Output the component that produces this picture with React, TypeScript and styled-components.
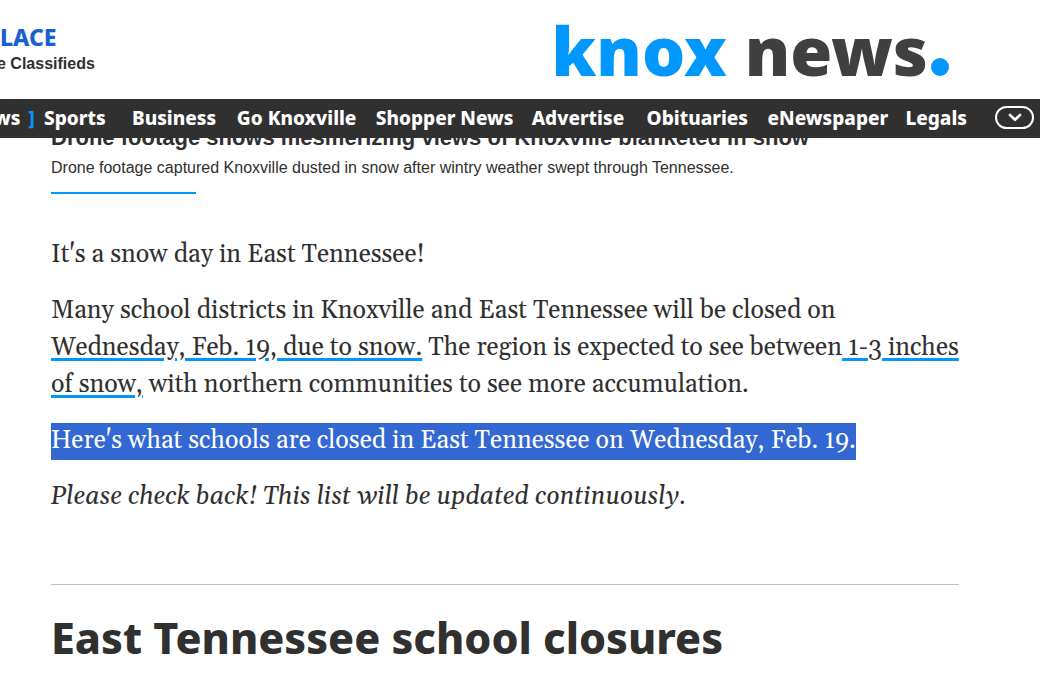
import React from 'react';
import styled, { createGlobalStyle } from 'styled-components';

const blue = '#0098ff';
const ink = '#303030';
const display = '"Noto Sans", "Open Sans", sans-serif';
const sans = '"Liberation Sans", Arial, sans-serif';
const serif = 'Gelasio, Georgia, "Liberation Serif", serif';

const GlobalStyle = createGlobalStyle`
  *, *::before, *::after { box-sizing: border-box; }
  body { margin: 0; background: #fff; color: ${ink}; overflow-x: hidden; }
  a { color: inherit; text-decoration: none; }
  h1, h2, p, ul { margin: 0; padding: 0; }
`;

const Header = styled.header`
  position: sticky;
  top: 0;
  z-index: 1;
  background: #fff;
`;

const Masthead = styled.div`
  display: flex;
  justify-content: space-between;
  align-items: flex-start;
  height: 99px;
  padding-right: 91px;
`;

const Promo = styled.a`
  display: flex;
  flex-direction: column;
  padding-top: 22px;
  white-space: nowrap;
`;

const PromoTitle = styled.span`
  font: 800 23px/30px ${display};
  color: #1660cf;
`;

const PromoText = styled.span`
  margin-left: -3px;
  font: 700 16px/24px ${sans};
`;

const Logo = styled.a`
  display: flex;
  align-items: baseline;
  font: 900 68px/90px ${display};
  padding-top: 5px;
  color: #404040;
`;

const LogoCity = styled.span`
  color: ${blue};
  margin-right: 18px;
`;

const LogoDot = styled.span`
  width: 18px;
  height: 18px;
  border-radius: 50%;
  margin-left: 3px;
  background: ${blue};
`;

const NavBar = styled.nav`
  display: flex;
  align-items: center;
  height: 39px;
  padding: 0 6px 2px 0;
  background: ${ink};
  color: #fff;
  font: 800 19px/36px ${display};
  white-space: nowrap;
`;

const CurrentSection = styled.a`
  display: flex;
  gap: 8px;
  width: 50px;
  margin-left: -6px;
`;

const Bracket = styled.span`
  color: ${blue};
`;

const NavList = styled.ul`
  display: grid;
  flex: 1;
  grid-template-columns: 88fr 105fr 139fr 156fr 115fr 121fr 138fr max-content;
  list-style: none;
`;

const MoreButton = styled.button`
  display: flex;
  align-items: center;
  justify-content: center;
  width: 39px;
  height: 23px;
  margin-left: 28px;
  padding: 0;
  border: 2px solid #fff;
  border-radius: 12px;
  background: none;
  color: #fff;
`;

const Article = styled.main`
  margin-top: -13px;
  padding: 0 81px 24px 51px;
`;

const VideoTitle = styled.h2`
  font: 700 22px/26px ${sans};
`;

const VideoCaption = styled.p`
  margin-top: 5px;
  font: 400 16px/24px ${sans};
`;

const Accent = styled.div`
  width: 145px;
  height: 2px;
  margin-top: 12px;
  background: ${blue};
`;

const Story = styled.div`
  display: flex;
  flex-direction: column;
  gap: 19px;
  margin-top: 43px;
  font: 400 25px/37px ${serif};
  font-feature-settings: "onum";
`;

const StoryLink = styled.a`
  text-decoration: underline ${blue} 3px;
  text-underline-offset: 3px;
`;

const Selected = styled.p`
  align-self: flex-start;
  background: #3367d1;
  color: #fff;
`;

const Divider = styled.hr`
  height: 1px;
  margin: 68px 0 25px;
  border: 0;
  background: #c0c0c0;
`;

const SectionTitle = styled.h1`
  font: 800 43px/56px ${display};
`;

const sections = [
  'Sports',
  'Business',
  'Go Knoxville',
  'Shopper News',
  'Advertise',
  'Obituaries',
  'eNewspaper',
  'Legals',
];

export default function App() {
  return (
    <>
      <GlobalStyle />
      <Header>
        <Masthead>
          <Promo href="#classifieds">
            <PromoTitle>LACE</PromoTitle>
            <PromoText>e Classifieds</PromoText>
          </Promo>
          <Logo href="#home">
            <LogoCity>knox</LogoCity>
            <span>news</span>
            <LogoDot />
          </Logo>
        </Masthead>
        <NavBar>
          <CurrentSection href="#news">
            <span>ws</span>
            <Bracket>]</Bracket>
          </CurrentSection>
          <NavList>
            {sections.map((name) => (
              <li key={name}>
                <a href={`#${name}`}>{name}</a>
              </li>
            ))}
          </NavList>
          <MoreButton type="button" aria-label="More sections">
            <svg width="14" height="9" viewBox="0 0 14 9" fill="none" aria-hidden="true">
              <path d="M2 2 7 6.8 12 2" stroke="currentColor" strokeWidth="2.6" strokeLinecap="round" strokeLinejoin="round" />
            </svg>
          </MoreButton>
        </NavBar>
      </Header>
      <Article>
        <VideoTitle>Drone footage shows mesmerizing views of Knoxville blanketed in snow</VideoTitle>
        <VideoCaption>
          Drone footage captured Knoxville dusted in snow after wintry weather swept through Tennessee.
        </VideoCaption>
        <Accent />
        <Story>
          <p>It's a snow day in East Tennessee!</p>
          <p>
            Many school districts in Knoxville and East Tennessee will be closed on{' '}
            <StoryLink href="#closures">Wednesday, Feb. 19, due to snow.</StoryLink> The region is expected to see
            between<StoryLink href="#forecast"> 1-3 inches of snow,</StoryLink> with northern communities to see more
            accumulation.
          </p>
          <Selected>Here's what schools are closed in East Tennessee on Wednesday, Feb. 19.</Selected>
          <p>
            <em>Please check back! This list will be updated continuously.</em>
          </p>
        </Story>
        <Divider />
        <SectionTitle>East Tennessee school closures</SectionTitle>
      </Article>
    </>
  );
}
